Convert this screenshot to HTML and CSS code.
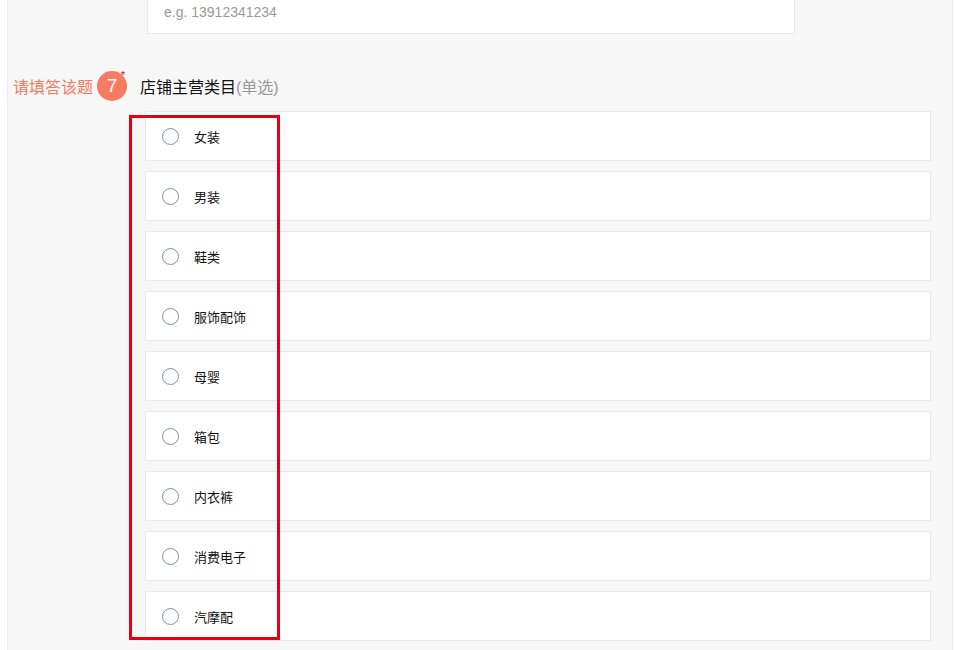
FILE: index.html
```html
<!DOCTYPE html>
<html lang="zh-CN">
<head>
    <meta charset="UTF-8">
    <meta name="viewport" content="width=device-width, initial-scale=1.0">
    <title>店铺主营类目</title>
    <link rel="stylesheet" href="styles.css">
</head>
<body>
    <div class="page">
        <div class="phone-input">e.g. 13912341234</div>

        <div class="question">
            <span class="warn">请填答该题</span>
            <span class="badge">7<i class="star">*</i></span>
            <span class="title">店铺主营类目<span class="hint">(单选)</span></span>
        </div>

        <div class="options">
            <label class="option"><span class="radio"></span><span class="text">女装</span></label>
            <label class="option"><span class="radio"></span><span class="text">男装</span></label>
            <label class="option"><span class="radio"></span><span class="text">鞋类</span></label>
            <label class="option"><span class="radio"></span><span class="text">服饰配饰</span></label>
            <label class="option"><span class="radio"></span><span class="text">母婴</span></label>
            <label class="option"><span class="radio"></span><span class="text">箱包</span></label>
            <label class="option"><span class="radio"></span><span class="text">内衣裤</span></label>
            <label class="option"><span class="radio"></span><span class="text">消费电子</span></label>
            <label class="option"><span class="radio"></span><span class="text">汽摩配</span></label>
        </div>

        <div class="highlight"></div>
    </div>
</body>
</html>
```

FILE: styles.css
```css
html, body {
    margin: 0;
    padding: 0;
    height: 100%;
    overflow: hidden;
    background: #fff;
    font-family: "Liberation Sans", "Noto Sans CJK SC", sans-serif;
    color: #111;
}

.page {
    position: relative;
    margin-left: 7px;
    width: 946px;
    height: 650px;
    box-sizing: border-box;
    background: #f7f7f7;
    border-left: 1px solid #ececec;
    border-right: 1px solid #ececec;
    display: flex;
    flex-direction: column;
}

.phone-input {
    margin: -10px 0 0 139px;
    width: 648px;
    height: 44px;
    box-sizing: border-box;
    padding-left: 16px;
    display: flex;
    align-items: center;
    background: #fff;
    border: 1px solid #e8e8e8;
    font-size: 14px;
    color: #999;
}

.question {
    margin: 37px 0 0 5px;
    height: 30px;
    display: flex;
    align-items: center;
    font-size: 16px;
}

.warn {
    color: #f47b63;
}

.badge {
    position: relative;
    margin-left: 4px;
    width: 30px;
    height: 30px;
    border-radius: 50%;
    background: #f67b62;
    color: #fff;
    font-size: 19px;
    display: flex;
    align-items: center;
    justify-content: center;
}

.star {
    position: absolute;
    top: -2px;
    right: 2px;
    font-style: normal;
    font-size: 11px;
    color: #e60012;
}

.title {
    margin-left: 13px;
    color: #111;
}

.hint {
    color: #999;
}

.options {
    margin: 10px 21px 0 137px;
    display: flex;
    flex-direction: column;
    gap: 10px;
}

.option {
    height: 50px;
    box-sizing: border-box;
    padding-left: 16px;
    display: flex;
    align-items: center;
    background: #fff;
    border: 1px solid #e8e8e8;
    font-size: 13px;
    cursor: pointer;
}

.radio {
    width: 17px;
    height: 17px;
    box-sizing: border-box;
    border-radius: 50%;
    border: 1px solid #7d8fa6;
    background: #fff;
}

.text {
    margin-left: 15px;
}

.highlight {
    position: absolute;
    left: 121px;
    top: 115px;
    width: 151px;
    height: 525px;
    box-sizing: border-box;
    border: 3px solid #e60012;
}
```
